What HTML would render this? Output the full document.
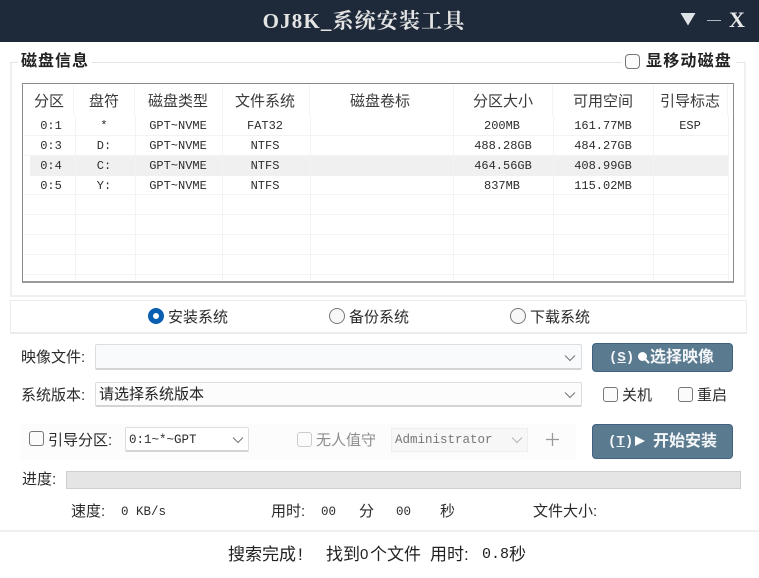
<!DOCTYPE html>
<html><head><meta charset="utf-8">
<style>
html,body{margin:0;padding:0;background:#fff}
#p{position:relative;width:759px;height:578px;overflow:hidden;background:#fff;font-family:"Liberation Sans","Noto Sans CJK SC",sans-serif;color:#2a2a2a;font-size:15px}
#p div{position:absolute;box-sizing:border-box}
.t{white-space:nowrap;line-height:20px;height:20px}
.c{transform:translateX(-50%);text-align:center}
.m{font-family:"Liberation Mono","Noto Sans CJK SC",monospace;font-size:12px;color:#2c2c2c}
.h{color:#3a3a3a}
.l{background:#f3f3f3}
.cb{width:15px;height:15px;border:1px solid #777;border-radius:3px;background:#fbfbfb}
.sel{background:#f8fafc;border:1px solid #dcdee0;border-bottom:2px solid #d2d4d6;border-radius:2px}
.btn{background:#5a7a90;border:1px solid #3f6280;border-radius:4px;color:#f4f6f8;font-weight:bold;white-space:nowrap}
svg{position:absolute}
</style></head><body><div id="p">

<div style="left:0;top:0;width:759px;height:42px;background:#1e2a3a"></div>
<div class="t" style="left:364px;top:9px;height:24px;line-height:24px;transform:translateX(-50%);color:#e4e4e4;font-family:'Liberation Serif','Noto Serif CJK SC',serif;font-size:21px;font-weight:bold;letter-spacing:1.15px">OJ8K_系统安装工具</div>
<svg style="left:680px;top:12px" width="16" height="14"><path d="M0.5 1H15.5L8 13.5Z" fill="#dfe3e8"/></svg>
<div style="left:707px;top:20px;width:14px;height:1px;background:#aeb6bf"></div>
<div class="t" style="left:729px;top:8px;height:24px;color:#e8e8e8;font:bold 22px/24px 'Liberation Serif',serif">X</div>

<!-- group box -->
<div style="left:10px;top:62px;width:736px;height:235px;border:2px solid #f0f0f0;border-top:1px solid #e4e4e4"></div>
<div class="t" style="left:18px;top:52px;background:#fff;padding:0 3px;font-size:16px;font-weight:bold;letter-spacing:1px;color:#222">磁盘信息</div>
<div style="left:622px;top:52px;width:114px;height:20px;background:#fff"></div>
<div class="cb" style="left:625px;top:54px;border-radius:4px"></div>
<div class="t" style="left:646px;top:52px;font-size:16px;font-weight:bold;letter-spacing:1.2px;color:#222">显移动磁盘</div>

<!-- table -->
<div style="left:22px;top:83px;width:712px;height:200px;border:1px solid #8a8a8a;border-bottom:2px solid #999;background:#fff"></div>
<div style="left:30px;top:155px;width:699px;height:21px;background:#f1f0f0"></div>
<div class="l" style="left:24px;top:135px;width:706px;height:1px"></div>
<div class="l" style="left:24px;top:155px;width:706px;height:1px"></div>
<div class="l" style="left:24px;top:194px;width:706px;height:1px"></div>
<div class="l" style="left:24px;top:214px;width:706px;height:1px"></div>
<div class="l" style="left:24px;top:234px;width:706px;height:1px"></div>
<div class="l" style="left:24px;top:254px;width:706px;height:1px"></div>
<div class="l" style="left:24px;top:274px;width:706px;height:1px"></div>

<div class="l" style="left:73px;top:85px;width:1px;height:30px"></div>
<div class="l" style="left:134px;top:85px;width:1px;height:30px"></div>
<div class="l" style="left:222px;top:85px;width:1px;height:30px"></div>
<div class="l" style="left:309px;top:85px;width:1px;height:30px"></div>
<div class="l" style="left:453px;top:85px;width:1px;height:30px"></div>
<div class="l" style="left:552px;top:85px;width:1px;height:30px"></div>
<div class="l" style="left:653px;top:85px;width:1px;height:30px"></div>
<div class="l" style="left:727px;top:85px;width:1px;height:30px"></div>

<div class="l" style="left:75px;top:115px;width:1px;height:165px"></div>
<div class="l" style="left:135px;top:115px;width:1px;height:165px"></div>
<div class="l" style="left:222px;top:115px;width:1px;height:165px"></div>
<div class="l" style="left:310px;top:115px;width:1px;height:165px"></div>
<div class="l" style="left:453px;top:115px;width:1px;height:165px"></div>
<div class="l" style="left:553px;top:115px;width:1px;height:165px"></div>
<div class="l" style="left:653px;top:115px;width:1px;height:165px"></div>
<div class="l" style="left:728px;top:115px;width:1px;height:165px"></div>

<div class="t c h" style="left:49px;top:92px">分区</div>
<div class="t c h" style="left:104px;top:92px">盘符</div>
<div class="t c h" style="left:178px;top:92px">磁盘类型</div>
<div class="t c h" style="left:265px;top:92px">文件系统</div>
<div class="t c h" style="left:380px;top:92px">磁盘卷标</div>
<div class="t c h" style="left:503px;top:92px">分区大小</div>
<div class="t c h" style="left:603px;top:92px">可用空间</div>
<div class="t c h" style="left:690px;top:92px">引导标志</div>

<div class="t c m" style="left:51px;top:116px">0:1</div>
<div class="t c m" style="left:104px;top:116px">*</div>
<div class="t c m" style="left:178px;top:116px">GPT~NVME</div>
<div class="t c m" style="left:265px;top:116px">FAT32</div>
<div class="t c m" style="left:502px;top:116px">200MB</div>
<div class="t c m" style="left:603px;top:116px">161.77MB</div>
<div class="t c m" style="left:690px;top:116px">ESP</div>

<div class="t c m" style="left:51px;top:136px">0:3</div>
<div class="t c m" style="left:104px;top:136px">D:</div>
<div class="t c m" style="left:178px;top:136px">GPT~NVME</div>
<div class="t c m" style="left:265px;top:136px">NTFS</div>
<div class="t c m" style="left:503px;top:136px">488.28GB</div>
<div class="t c m" style="left:603px;top:136px">484.27GB</div>

<div class="t c m" style="left:51px;top:156px">0:4</div>
<div class="t c m" style="left:104px;top:156px">C:</div>
<div class="t c m" style="left:178px;top:156px">GPT~NVME</div>
<div class="t c m" style="left:265px;top:156px">NTFS</div>
<div class="t c m" style="left:503px;top:156px">464.56GB</div>
<div class="t c m" style="left:603px;top:156px">408.99GB</div>

<div class="t c m" style="left:51px;top:176px">0:5</div>
<div class="t c m" style="left:104px;top:176px">Y:</div>
<div class="t c m" style="left:178px;top:176px">GPT~NVME</div>
<div class="t c m" style="left:265px;top:176px">NTFS</div>
<div class="t c m" style="left:502px;top:176px">837MB</div>
<div class="t c m" style="left:603px;top:176px">115.02MB</div>

<!-- radio group -->
<div style="left:10px;top:300px;width:737px;height:34px;border:1px solid #ececec;border-bottom:2px solid #ececec"></div>
<div style="left:148px;top:308px;width:16px;height:16px;border-radius:50%;border:5px solid #0a5fb0;background:#fff"></div>
<div class="t" style="left:168px;top:308px">安装系统</div>
<div style="left:329px;top:308px;width:16px;height:16px;border-radius:50%;border:1px solid #777;background:#f8f8f8"></div>
<div class="t" style="left:349px;top:308px">备份系统</div>
<div style="left:510px;top:308px;width:16px;height:16px;border-radius:50%;border:1px solid #777;background:#f8f8f8"></div>
<div class="t" style="left:530px;top:308px">下载系统</div>

<!-- image file -->
<div class="t" style="left:21px;top:348px">映像文件:</div>
<div class="sel" style="left:95px;top:344px;width:487px;height:26px"></div>
<svg style="left:564px;top:354px" width="12" height="8"><path d="M1 1.5L6 6.5L11 1.5" fill="none" stroke="#777" stroke-width="1.1"/></svg>
<div class="btn" style="left:592px;top:343px;width:141px;height:29px">
<div class="t" style="left:16px;top:4px;font-family:'Liberation Mono',monospace;font-size:14px;letter-spacing:0">(<u>S</u>)</div>
<svg style="left:44px;top:7px" width="13" height="13"><circle cx="5.5" cy="5.5" r="4.5" fill="#fff"/><path d="M8.5 8.5L12 12" stroke="#fff" stroke-width="2"/></svg>
<div class="t" style="left:57px;top:4px;font-size:16px">选择映像</div>
</div>

<!-- version -->
<div class="t" style="left:21px;top:386px">系统版本:</div>
<div class="sel" style="left:95px;top:382px;width:487px;height:25px;background:#fcfcfd"></div>
<div class="t" style="left:99px;top:385px;color:#222">请选择系统版本</div>
<svg style="left:564px;top:391px" width="12" height="8"><path d="M1 1.5L6 6.5L11 1.5" fill="none" stroke="#777" stroke-width="1.1"/></svg>
<div class="cb" style="left:603px;top:387px"></div>
<div class="t" style="left:622px;top:386px">关机</div>
<div class="cb" style="left:678px;top:387px"></div>
<div class="t" style="left:697px;top:386px">重启</div>

<!-- boot row -->
<div style="left:20px;top:424px;width:556px;height:36px;background:#fcfcfd"></div>
<div class="cb" style="left:29px;top:431px"></div>
<div class="t" style="left:48px;top:431px">引导分区:</div>
<div class="sel" style="left:125px;top:427px;width:124px;height:25px;background:#fff"></div>
<div class="t m" style="left:129px;top:430px;font-size:12.5px">0:1~*~GPT</div>
<svg style="left:232px;top:436px" width="12" height="8"><path d="M1 1.5L6 6.5L11 1.5" fill="none" stroke="#777" stroke-width="1.1"/></svg>
<div class="cb" style="left:297px;top:432px;border-color:#ccc"></div>
<div class="t" style="left:316px;top:431px;color:#8e8e8e">无人值守</div>
<div style="left:391px;top:428px;width:137px;height:24px;background:#f7f7f7;border:1px solid #eee"></div>
<div class="t m" style="left:395px;top:430px;color:#777;font-size:12.5px">Administrator</div>
<svg style="left:511px;top:436px" width="12" height="8"><path d="M1 1.5L6 6.5L11 1.5" fill="none" stroke="#bbb" stroke-width="1.2"/></svg>
<svg style="left:546px;top:433px" width="13" height="13"><path d="M6.5 0V13M0 6.5H13" stroke="#999" stroke-width="1.3"/></svg>
<div class="btn" style="left:592px;top:424px;width:141px;height:35px">
<div class="t" style="left:15px;top:7px;font-family:'Liberation Mono',monospace;font-size:14px">(<u>T</u>)</div>
<svg style="left:42px;top:11px" width="10" height="10"><path d="M0 0L10 5L0 10Z" fill="#fff"/></svg>
<div class="t" style="left:60px;top:7px;font-size:16px">开始安装</div>
</div>

<!-- progress -->
<div class="t" style="left:22px;top:470px">进度:</div>
<div style="left:66px;top:471px;width:675px;height:18px;background:#e5e5e5;border:1px solid #cfcfcf"></div>

<div class="t" style="left:71px;top:502px">速度:</div>
<div class="t m" style="left:121px;top:502px;font-size:12.5px">0 KB/s</div>
<div class="t" style="left:271px;top:502px">用时:</div>
<div class="t m" style="left:321px;top:502px;font-size:12.5px">00</div>
<div class="t" style="left:359px;top:502px">分</div>
<div class="t m" style="left:396px;top:502px;font-size:12.5px">00</div>
<div class="t" style="left:440px;top:502px">秒</div>
<div class="t" style="left:533px;top:502px">文件大小:</div>

<div style="left:0;top:530px;width:759px;height:2px;background:#f0f0f0"></div>
<div class="t" style="left:228px;top:544px;font-size:17px;height:22px;line-height:22px;color:#222">搜索完成</div>
<div class="t" style="left:298px;top:544px;font-size:17px;height:22px;line-height:22px;color:#222">!</div>
<div class="t" style="left:326px;top:544px;font-size:17px;height:22px;line-height:22px;color:#222">找到</div>
<div class="t" style="left:360px;top:544px;font-size:15px;height:22px;line-height:22px;color:#222">0</div>
<div class="t" style="left:370px;top:544px;font-size:17px;height:22px;line-height:22px;color:#222">个文件</div>
<div class="t" style="left:430px;top:544px;font-size:17px;height:22px;line-height:22px;color:#222">用时:</div>
<div class="t m" style="left:482px;top:544px;font-size:15px;height:22px;line-height:22px;color:#222">0.8</div>
<div class="t" style="left:509px;top:544px;font-size:17px;height:22px;line-height:22px;color:#222">秒</div>
</div></body></html>
